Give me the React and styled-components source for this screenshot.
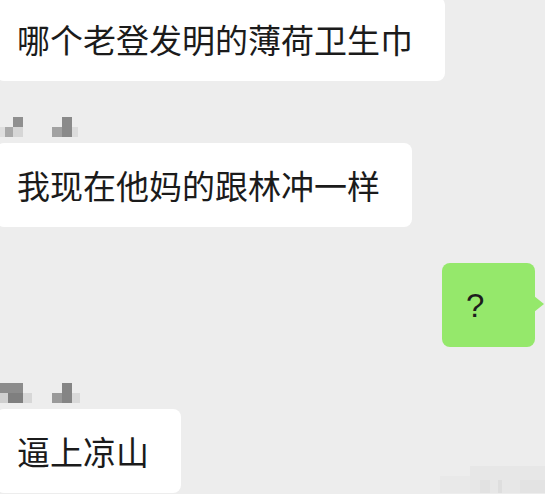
import styled, { createGlobalStyle } from 'styled-components';

const GlobalStyle = createGlobalStyle`
  body {
    margin: 0;
    background: #ffffff;
    font-family: "Noto Sans CJK SC", "Noto Sans", sans-serif;
  }
`;

const Screen = styled.div`
  width: 545px;
  height: 494px;
  background: #ededed;
  overflow: hidden;
  display: flex;
  flex-direction: column;
`;

const Row = styled.div`
  display: flex;
  align-items: flex-end;
  justify-content: ${(p) => (p.$mine ? 'flex-end' : 'flex-start')};
  margin-top: ${(p) => p.$top}px;
  padding-right: ${(p) => (p.$mine ? 10 : 0)}px;
  flex-shrink: 0;
`;

const Bubble = styled.div`
  position: relative;
  box-sizing: border-box;
  height: 84px;
  display: flex;
  align-items: center;
  padding: 0 32px 0 ${(p) => (p.$mine ? 24 : 21)}px;
  margin-left: ${(p) => (p.$mine ? 0 : -4)}px;
  width: ${(p) => (p.$mine ? '93px' : 'auto')};
  background: ${(p) => (p.$mine ? '#95e86b' : '#ffffff')};
  border-radius: 8px;
  color: #1b1b1b;
  font-size: 33px;
  line-height: 1;
  white-space: nowrap;
`;

const Mark = styled.span`
  font-family: "Liberation Sans", Arial, sans-serif;
  font-size: 33px;
  color: #1d1d1d;
`;

const Tail = styled.span`
  position: absolute;
  right: -9px;
  top: 33px;
  width: 0;
  height: 0;
  border-top: 8px solid transparent;
  border-bottom: 8px solid transparent;
  border-left: 10px solid #95e86b;
`;

const Name = styled.svg`
  display: block;
  margin-top: ${(p) => p.$top}px;
  flex-shrink: 0;
`;

const Stamp = styled.svg`
  display: block;
  margin-left: auto;
`;

const MosaicOne = () => (
  <Name $top={36} width="90" height="20" viewBox="0 0 90 20">
    <rect x="0" y="10" width="5" height="10" fill="#dedede" />
    <rect x="5" y="10" width="8" height="10" fill="#a9a9a9" />
    <rect x="13" y="0" width="10" height="10" fill="#8f8f8f" />
    <rect x="13" y="10" width="10" height="10" fill="#d6d6d6" />
    <rect x="52" y="10" width="10" height="10" fill="#a2a2a2" />
    <rect x="62" y="0" width="10" height="20" fill="#8a8a8a" />
    <rect x="72" y="10" width="6" height="10" fill="#dcdcdc" />
  </Name>
);

const MosaicTwo = () => (
  <Name $top={36} width="90" height="20" viewBox="0 0 90 20">
    <rect x="0" y="0" width="23" height="10" fill="#8c8c8c" />
    <rect x="0" y="10" width="8" height="10" fill="#cfcfcf" />
    <rect x="8" y="10" width="15" height="10" fill="#7f7f7f" />
    <rect x="23" y="10" width="9" height="10" fill="#d7d7d7" />
    <rect x="52" y="10" width="10" height="10" fill="#9a9a9a" />
    <rect x="62" y="0" width="10" height="20" fill="#858585" />
    <rect x="72" y="10" width="8" height="10" fill="#d9d9d9" />
  </Name>
);

export default function App() {
  return (
    <>
      <GlobalStyle />
      <Screen>
        <Row $top={-3}>
          <Bubble>哪个老登发明的薄荷卫生巾</Bubble>
        </Row>
        <MosaicOne />
        <Row $top={6}>
          <Bubble>我现在他妈的跟林冲一样</Bubble>
        </Row>
        <Row $top={36} $mine>
          <Bubble $mine>
            <Mark>?</Mark>
            <Tail />
          </Bubble>
        </Row>
        <MosaicTwo />
        <Row $top={6}>
          <Bubble>逼上凉山</Bubble>
          <Stamp width="105" height="27" viewBox="0 0 105 27">
            <rect x="30" y="0" width="75" height="27" fill="#e7e7e7" />
            <rect x="0" y="10" width="30" height="17" fill="#e9e9e9" />
            <rect x="40" y="14" width="10" height="13" fill="#e2e2e2" />
            <rect x="58" y="14" width="4" height="13" fill="#dedede" />
            <rect x="80" y="14" width="25" height="13" fill="#e3e3e3" />
          </Stamp>
        </Row>
      </Screen>
    </>
  );
}
